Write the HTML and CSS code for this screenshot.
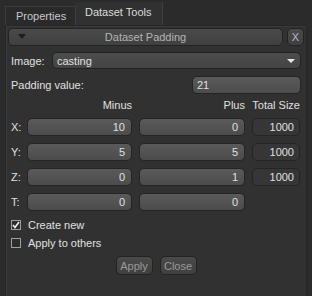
FILE: index.html
```html
<!DOCTYPE html>
<html lang="en">
<head>
    <meta charset="UTF-8">
    <title>Dataset Padding</title>
    <link rel="stylesheet" href="styles.css">
</head>
<body>
    <div class="tabs">
        <div class="tab">Properties</div>
        <div class="tab tab-active">Dataset Tools</div>
    </div>

    <div class="panel">
        <div class="title-row">
            <div class="title-bar">
                <svg class="title-arrow" width="8" height="5" viewBox="0 0 8 5"><path d="M0 0 H8 L4 5 Z" fill="#1c1c1c"/></svg>
                <span>Dataset Padding</span>
            </div>
            <div class="close-x">X</div>
        </div>

        <div class="form">
            <div class="row">
                <span class="label">Image:</span>
                <div class="combo">
                    <span>casting</span>
                    <svg width="8" height="4" viewBox="0 0 8 4"><path d="M0 0 H8 L4 4 Z" fill="#e8e8e8"/></svg>
                </div>
            </div>

            <div class="row row-pad">
                <span class="label">Padding value:</span>
                <div class="field field-left">21</div>
            </div>

            <div class="grid">
                <span></span>
                <span class="col-head">Minus</span>
                <span class="col-head">Plus</span>
                <span class="col-head">Total Size</span>

                <span class="label">X:</span>
                <div class="field">10</div>
                <div class="field">0</div>
                <div class="total">1000</div>

                <span class="label">Y:</span>
                <div class="field">5</div>
                <div class="field">5</div>
                <div class="total">1000</div>

                <span class="label">Z:</span>
                <div class="field">0</div>
                <div class="field">1</div>
                <div class="total">1000</div>

                <span class="label">T:</span>
                <div class="field">0</div>
                <div class="field">0</div>
                <span></span>
            </div>

            <label class="check">
                <span class="box">
                    <svg width="8" height="8" viewBox="0 0 8 8"><path d="M1 4 L3 6.5 L7 1" fill="none" stroke="#f0f0f0" stroke-width="1.6"/></svg>
                </span>
                Create new
            </label>
            <label class="check">
                <span class="box"></span>
                Apply to others
            </label>

            <div class="buttons">
                <button class="btn">Apply</button>
                <button class="btn">Close</button>
            </div>
        </div>
    </div>
</body>
</html>
```

FILE: styles.css
```css
/* Base */
body {
    font-family: 'Liberation Sans', Arial, sans-serif;
    font-size: 11px;
    color: #e0e0e0;
    background-color: #2b2b2b;
    margin: 0;
    width: 312px;
    height: 296px;
    overflow: hidden;
}

/* Tabs */
.tabs {
    display: flex;
    align-items: flex-end;
    height: 25px;
    padding-left: 5px;
}

.tab {
    box-sizing: border-box;
    width: 71px;
    height: 19px;
    padding: 3px 0 0 10px;
    background-color: #2a2a2a;
    border: 1px solid #3c3c3c;
    border-bottom: none;
    color: #c8c8c8;
}

.tab-active {
    width: 87px;
    height: 23px;
    padding: 4px 0 0 9px;
    background-color: #313131;
    border: none;
    border-right: 1px solid #3e3e3e;
    color: #dcdcdc;
}

/* Panel */
.panel {
    box-sizing: border-box;
    margin-left: 5px;
    width: 302px;
    height: 271px;
    background-color: #313131;
    border: 1px solid #262626;
    border-bottom: none;
    box-shadow: inset 1px 1px 0 #3a3a3a;
}

.title-row {
    display: flex;
    gap: 4px;
    padding: 2px 2px 0 2px;
}

.title-bar {
    box-sizing: border-box;
    position: relative;
    flex: 1;
    height: 18px;
    border: 1px solid #232323;
    border-radius: 5px;
    background: linear-gradient(#4a4a4a, #404040);
    color: #b4b4b4;
    text-align: center;
    line-height: 16px;
}

.title-arrow {
    position: absolute;
    left: 9px;
    top: 5px;
}

.close-x {
    box-sizing: border-box;
    width: 17px;
    height: 18px;
    border: 1px solid #232323;
    border-radius: 5px;
    background: linear-gradient(#4a4a4a, #404040);
    color: #b8b8c8;
    text-align: center;
    line-height: 16px;
}

/* Form */
.form {
    padding: 6px 5px 0 5px;
}

.row {
    display: flex;
    align-items: center;
    justify-content: space-between;
    height: 17px;
}

.row-pad {
    margin-top: 7px;
}

.combo {
    box-sizing: border-box;
    display: flex;
    align-items: center;
    justify-content: space-between;
    width: 249px;
    height: 17px;
    padding: 0 5px 0 4px;
    border: 1px solid #222;
    border-radius: 5px;
    background: linear-gradient(#4c4c4c, #444444);
}

.field {
    box-sizing: border-box;
    height: 18px;
    padding-right: 6px;
    border: 1px solid #242424;
    border-radius: 5px;
    background: linear-gradient(#5a5a5a, #4c4c4c);
    text-align: right;
    line-height: 16px;
}

.row .field {
    width: 109px;
}

.field-left {
    text-align: left;
    padding: 0 0 0 4px;
}

.total {
    box-sizing: border-box;
    height: 18px;
    padding-right: 5px;
    border: 1px solid #242424;
    border-radius: 5px;
    background-color: #363636;
    text-align: right;
    line-height: 16px;
}

.grid {
    display: grid;
    grid-template-columns: 9px 105px 106px 48px;
    column-gap: 7px;
    row-gap: 7px;
    align-items: center;
    margin-top: 6px;
}

.col-head {
    text-align: right;
    height: 12px;
    line-height: 12px;
    white-space: nowrap;
}

/* Checkboxes */
.check {
    display: flex;
    align-items: center;
    gap: 7px;
    height: 18px;
    margin-top: 5px;
}

.check + .check {
    margin-top: 0;
}

.box {
    box-sizing: border-box;
    display: flex;
    align-items: center;
    justify-content: center;
    width: 10px;
    height: 10px;
    border: 1px solid #a0a0a0;
    background-color: #2e2e2e;
}

/* Buttons */
.buttons {
    display: flex;
    justify-content: center;
    gap: 7px;
    margin-top: 4px;
}

.btn {
    box-sizing: border-box;
    width: 37px;
    height: 19px;
    padding: 0;
    font-family: inherit;
    font-size: 11px;
    color: #9a9a9a;
    border: 1px solid #232323;
    border-radius: 5px;
    background: linear-gradient(#4a4a4a, #404040);
}
```
